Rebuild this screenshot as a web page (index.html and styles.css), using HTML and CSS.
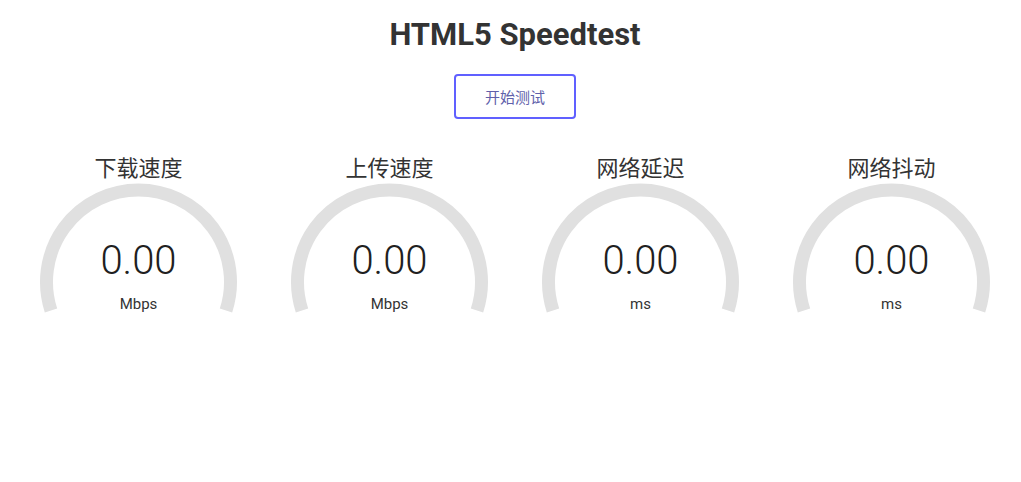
FILE: index.html
```html
<!DOCTYPE html>
<html lang="zh">
<head>
<meta charset="utf-8">
<title>HTML5 Speedtest</title>
<link rel="stylesheet" href="styles.css">
</head>
<body>
<div class="page">
  <h1 class="title">HTML5 Speedtest</h1>
  <div class="btn-row"><button class="start-btn">开始测试</button></div>
  <div class="gauges">
    <div class="gauge">
      <div class="gauge-title">下载速度</div>
      <div class="gauge-body">
        <svg class="meter" width="251" height="140" viewBox="0 0 251 140"><path d="M38 127.43 A92 92 0 1 1 213 127.43" fill="none" stroke="#e0e0e0" stroke-width="13"/></svg>
        <div class="readout"><div class="value">0.00</div><div class="unit">Mbps</div></div>
      </div>
    </div>
    <div class="gauge">
      <div class="gauge-title">上传速度</div>
      <div class="gauge-body">
        <svg class="meter" width="251" height="140" viewBox="0 0 251 140"><path d="M38 127.43 A92 92 0 1 1 213 127.43" fill="none" stroke="#e0e0e0" stroke-width="13"/></svg>
        <div class="readout"><div class="value">0.00</div><div class="unit">Mbps</div></div>
      </div>
    </div>
    <div class="gauge">
      <div class="gauge-title">网络延迟</div>
      <div class="gauge-body">
        <svg class="meter" width="251" height="140" viewBox="0 0 251 140"><path d="M38 127.43 A92 92 0 1 1 213 127.43" fill="none" stroke="#e0e0e0" stroke-width="13"/></svg>
        <div class="readout"><div class="value">0.00</div><div class="unit">ms</div></div>
      </div>
    </div>
    <div class="gauge">
      <div class="gauge-title">网络抖动</div>
      <div class="gauge-body">
        <svg class="meter" width="251" height="140" viewBox="0 0 251 140"><path d="M38 127.43 A92 92 0 1 1 213 127.43" fill="none" stroke="#e0e0e0" stroke-width="13"/></svg>
        <div class="readout"><div class="value">0.00</div><div class="unit">ms</div></div>
      </div>
    </div>
  </div>
</div>
</body>
</html>
```
FILE: styles.css
```css
html, body {
  margin: 0;
  padding: 0;
  background: #ffffff;
}
body {
  font-family: Roboto, "Noto Sans CJK SC", sans-serif;
  color: #202020;
}
.page {
  width: 1004px;
  margin-left: 13px;
}
.title {
  margin: 16px 0 0;
  font-size: 31px;
  line-height: 38px;
  font-weight: 700;
  color: #333333;
  text-align: center;
}
.btn-row {
  display: flex;
  justify-content: center;
  margin-top: 20px;
}
.start-btn {
  box-sizing: border-box;
  width: 122px;
  height: 45px;
  border: 2px solid #6060ff;
  border-radius: 4px;
  background: #ffffff;
  color: #6060aa;
  font-family: Roboto, "Noto Sans CJK SC", sans-serif;
  font-size: 15px;
  padding: 0;
}
.gauges {
  display: grid;
  grid-template-columns: repeat(4, 251px);
  margin-top: 36px;
}
.gauge {
  display: flex;
  flex-direction: column;
  align-items: center;
}
.gauge-title {
  font-size: 22px;
  line-height: 28px;
  color: #333333;
}
.gauge-body {
  display: grid;
  width: 251px;
}
.meter {
  grid-area: 1 / 1;
  display: block;
}
.readout {
  grid-area: 1 / 1;
  display: flex;
  flex-direction: column;
  align-items: center;
  padding-top: 56px;
}
.value {
  font-size: 40px;
  line-height: 44px;
  font-weight: 300;
  color: #202020;
}
.unit {
  margin-top: 12px;
  font-size: 15px;
  line-height: 18px;
  color: #333333;
}
```
